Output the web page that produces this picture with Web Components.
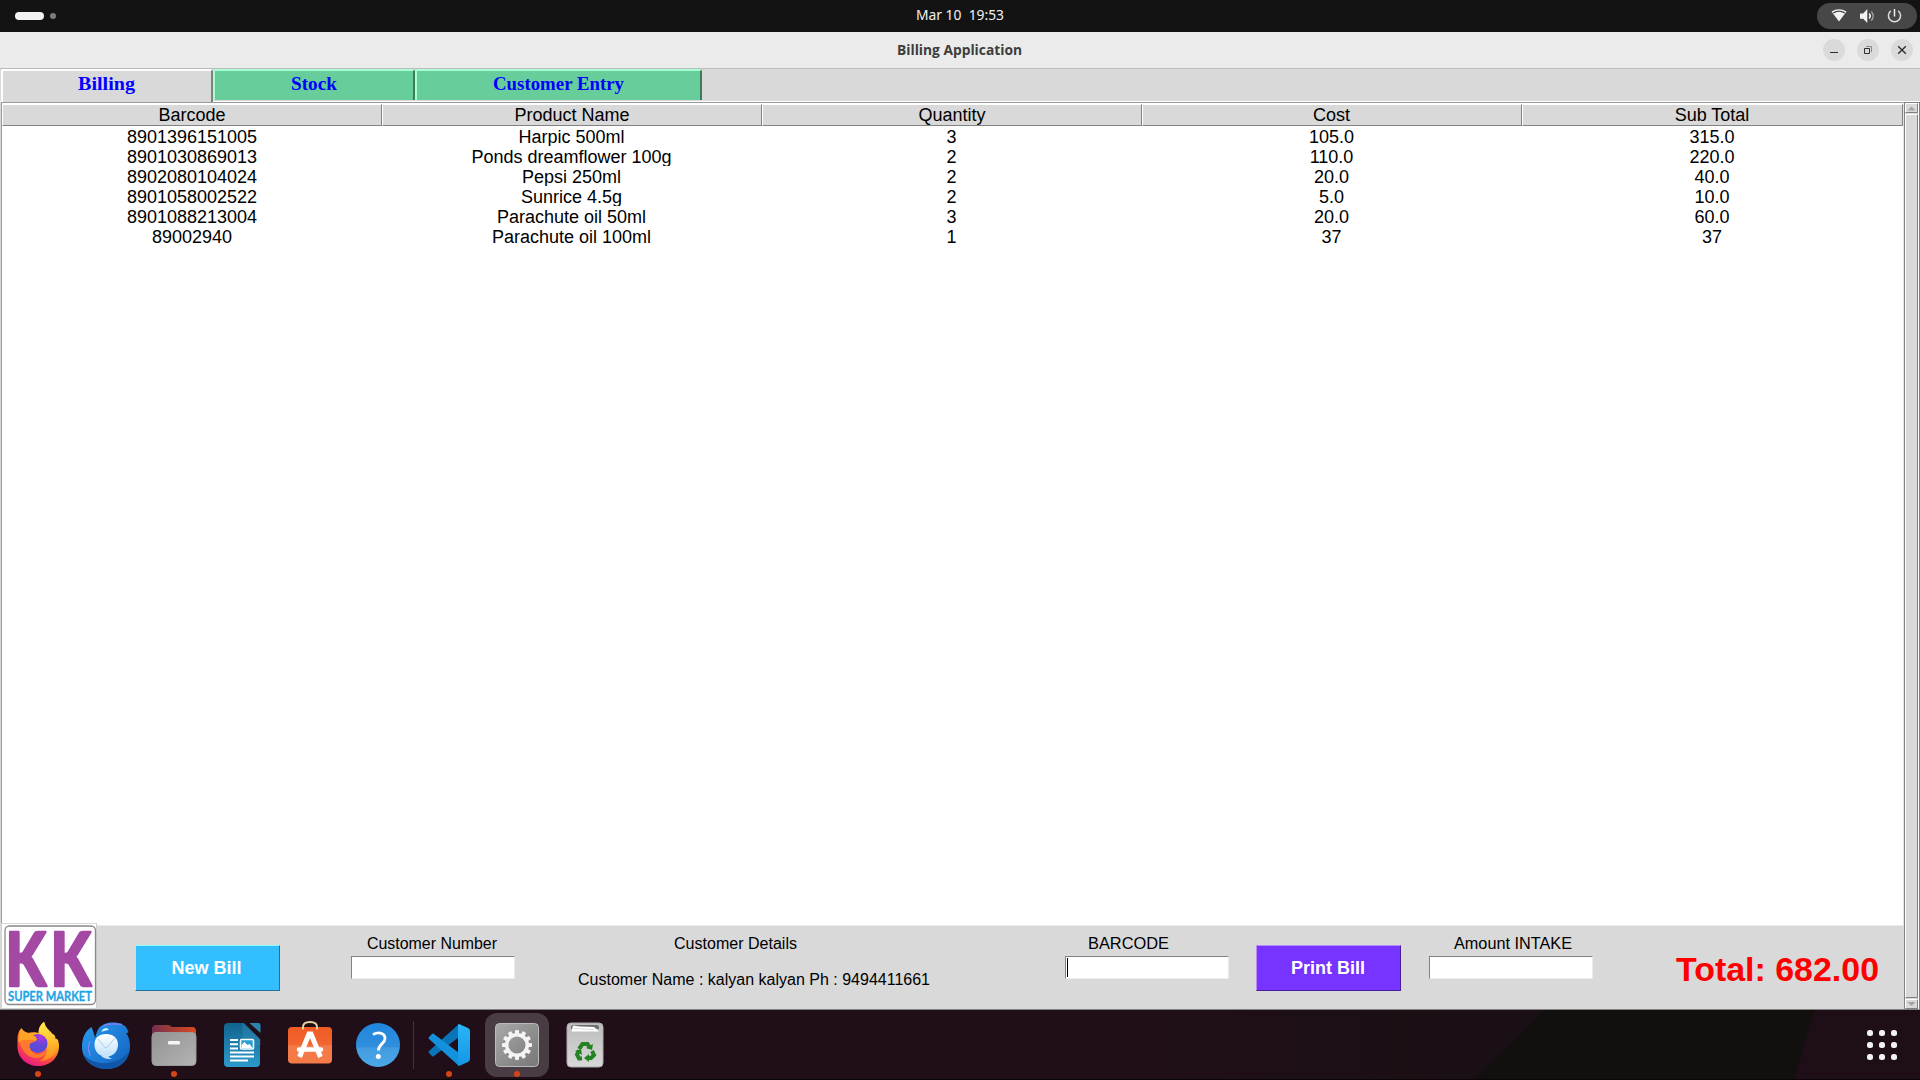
<!DOCTYPE html>
<html lang="en"><head><meta charset="utf-8"><title>Billing Application</title>
<style>html,body{margin:0;height:100%;overflow:hidden}body{font-family:"Liberation Sans",Arial,sans-serif;color:#000}</style></head>
<body><desktop-screen></desktop-screen>
<script>
const define=(name,html,init)=>customElements.define(name,class extends HTMLElement{
  constructor(){super();this.attachShadow({mode:'open'}).innerHTML='<style>*{box-sizing:border-box}:host{display:block;box-sizing:border-box}</style>'+html;}
  connectedCallback(){if(init&&!this.ready){this.ready=true;init(this,this.shadowRoot);}}
});

define('fit-text',`<style>:host{display:block}svg{display:block;overflow:visible}</style><svg height="1" width="1"><text></text></svg>`,(el,r)=>{
  const t=r.querySelector('text');t.textContent=el.getAttribute('value');
  const s=r.querySelector('svg'),w=el.getAttribute('w'),h=el.getAttribute('h');
  s.setAttribute('width',w);s.setAttribute('height',h);
  t.setAttribute('y',el.getAttribute('base'));t.setAttribute('textLength',w);t.setAttribute('lengthAdjust','spacingAndGlyphs');
  t.setAttribute('fill','currentColor');
});

define('top-bar',`<style>
:host{display:flex;height:32px;background:#131313;align-items:center;padding:0 3px 0 15px;justify-content:space-between;color:#f2f2f2}
.ws,.status{flex:1 1 0;display:flex;align-items:center}
.pill{width:29px;height:8px;border-radius:4px;background:#f2f2f2;margin-right:6px}.dot{width:6px;height:6px;border-radius:3px;background:#7d7d7d}
fit-text{font:400 14px "Noto Sans","Open Sans",sans-serif;margin-left:-12px}
.status{justify-content:flex-end}.tray{width:100px;height:26px;border-radius:13px;background:#474747;display:flex}
svg{display:block}
</style><div class="ws"><i class="pill"></i><i class="dot"></i></div>
<fit-text value="Mar 10&nbsp; 19:53" w="88" h="32" base="20"></fit-text>
<div class="status"><div class="tray"><svg width="100" height="26" fill="none" stroke="#f2f2f2">
<path d="M14.5 8.5Q22 3.8 29.500 8.500L22 18.500Z" fill="#f2f2f2" stroke="none"/><path d="M16.300 9.900Q22 6.400 27.700 9.900" stroke="#474747" stroke-width="1.300"/>
<path d="M43 10.500h3.200L50.300 6v14l-4.100-4.300H43Z" fill="#f2f2f2" stroke="none"/><path d="M52.300 10.600q1.800 2.400 0 4.800" stroke-width="1.600"/><path d="M54.300 8.300q3.800 4.700 0 9.400" stroke="#aaa" stroke-width="1.200"/>
<path d="M73.800 7.800a6.100 6.100 0 1 0 7.400 0" stroke-width="1.500" stroke="#ddd"/><path d="M77.500 6v7.500" stroke-width="1.500"/></svg></div></div>`);

define('window-button',`<style>:host{width:22px;height:22px;border-radius:11px;background:#dadada}svg{display:block}</style><svg width="22" height="22" fill="none" stroke="#2e2e2e"></svg>`,(el,r)=>{
  r.querySelector('svg').innerHTML={min:'<path d="M7 13.500h8" stroke-width="1"/>',
  max:'<path d="M7.500 9.500h5v5h-5z"/><path d="M9 7.500h5.500V13" stroke="#888"/>',close:'<path d="M7.200 7.200l7.600 7.600M14.800 7.200l-7.600 7.600" stroke-width="1.400"/>'}[el.getAttribute('kind')];
});

define('title-bar',`<style>
:host{display:flex;height:37px;background:#ebebeb;border-bottom:1px solid #bcbcbc;align-items:center;padding-right:7px}
div{flex:1 1 0}.btns{display:flex;justify-content:flex-end;gap:12px}
fit-text{font:700 14px "Open Sans","Noto Sans",sans-serif;color:#3d3d3d;margin-left:6px}
</style><div></div><fit-text value="Billing Application" w="125" h="36" base="23"></fit-text>
<div class="btns"><window-button kind="min"></window-button><window-button kind="max"></window-button><window-button kind="close"></window-button></div>`);

customElements.define('tab-label',class extends HTMLElement{
  connectedCallback(){if(this.shadowRoot)return;const r=this.attachShadow({mode:'open'});
  r.innerHTML=`<style>:host{display:flex;box-sizing:border-box;justify-content:center;height:31px;width:${this.getAttribute('width')}px;background:#66cd9b;border-top:2px solid #a8ffd4;border-left:2px solid #a8ffd4;border-right:2px solid #3d7b5d;border-radius:2px 3px 0 0;color:#00f;font:700 19.500px "Liberation Serif",serif}
  :host([active]){background:#d9d9d9;border-color:#fff #828282 #fff #fff;height:33px}fit-text{margin-left:-1px}</style><fit-text value="${this.getAttribute('name')}" w="${this.getAttribute('tw')}" h="29" base="19"></fit-text>`;}
});

define('tab-strip',`<style>:host{display:flex;height:33px;background:#d9d9d9;border-bottom:1px solid #fff;align-items:flex-start;padding-left:1px}</style>
<tab-label active name="Billing" width="212" tw="57"></tab-label><tab-label name="Stock" width="202" tw="46"></tab-label><tab-label name="Customer Entry" width="287" tw="131"></tab-label>`);

define('bill-table',`<style>
:host{flex:1;border:1px solid #9a9a9a;border-bottom:1px solid #ebebeb;border-right-color:#e4e4e4;background:#fff;padding:1px 0 0;margin-left:1px;min-height:0}
.head,.row{display:grid;grid-template-columns:repeat(4,380px) 1fr;text-align:center;font-size:18px}
.head{height:22px}.head div{background:#d9d9d9;border-right:1px solid #828282;border-bottom:1px solid #828282;border-left:1px solid #fff;border-top:1px solid #fff;line-height:21px;height:22px}
.head div:nth-child(n+4),.row div:nth-child(n+2){padding-right:1px}
.row{height:20px;line-height:22px;overflow:hidden}
</style><div class="head"></div><div class="body"></div>`,(el,r)=>{
  r.querySelector('.head').innerHTML=['Barcode','Product Name','Quantity','Cost','Sub Total'].map(x=>`<div>${x}</div>`).join('');
  r.querySelector('.body').innerHTML=[['8901396151005','Harpic 500ml','3','105.0','315.0'],['8901030869013','Ponds dreamflower 100g','2','110.0','220.0'],['8902080104024','Pepsi 250ml','2','20.0','40.0'],['8901058002522','Sunrice 4.5g','2','5.0','10.0'],['8901088213004','Parachute oil 50ml','3','20.0','60.0'],['89002940','Parachute oil 100ml','1','37','37']]
  .map(a=>'<div class="row">'+a.map(x=>`<div>${x}</div>`).join('')+'</div>').join('');
});

define('market-logo',`<style>:host{width:96px;height:86px;margin:-3px 0 0 1px;background:#fff;border:1px solid #d0d0d0;border-top-color:#d9d9d9}svg{display:block;overflow:visible}</style>
<svg width="94" height="84" viewBox="2 924 94 84"><rect x="5" y="926" width="90.500" height="78.500" rx="4.500" fill="#fff" stroke="#8b878b" stroke-width="1.300"/>
<g fill="#a349a4" stroke="#a349a4" stroke-width="2.500" stroke-linejoin="round" font-family="Lato,sans-serif" font-weight="900" font-size="75"><text x="5.500" y="985.500" textLength="40.500" lengthAdjust="spacingAndGlyphs">K</text><text x="50.500" y="985.500" textLength="40.500" lengthAdjust="spacingAndGlyphs">K</text></g>
<text x="8" y="1000.500" font-family="Lato,sans-serif" font-weight="700" font-size="13.500" fill="#1ca4e6" stroke="#1ca4e6" stroke-width=".3" textLength="84" lengthAdjust="spacingAndGlyphs">SUPER MARKET</text></svg>`);

define('push-button',`<style>:host{width:145px;height:46px;color:#fff;font:700 18px/44px "Liberation Sans",sans-serif;text-align:center;background:var(--c);border:1px solid;border-color:var(--hi) var(--lo) var(--lo) var(--hi);padding-right:1px}</style><slot></slot>`);

customElements.define('labelled-entry',class extends HTMLElement{
  connectedCallback(){if(this.shadowRoot)return;this.attachShadow({mode:'open'}).innerHTML=`<style>:host{display:block;width:164px;padding-top:8px}div{box-sizing:border-box}.l{height:22px;font-size:16px;padding-left:${this.getAttribute('indent')}px}
  .box{height:23px;background:#fff;border:1px solid;border-color:#828282 #ebebeb #ebebeb #828282;padding:1px}.box i{display:block;width:1px;height:19px}:host([focus]) i{background:#000}</style><div class="l"><fit-text value="${this.getAttribute('label')}" w="${this.getAttribute('w')}" h="20" base="15"></fit-text></div><div class="box"><i></i></div>`;}
});

define('bill-footer',`<style>
:host{height:84px;background:#d9d9d9;border-bottom:1px solid #828282;display:flex;align-items:flex-start}
.new{--c:#33beff;--hi:#8ff;--lo:#1f7299;margin:19px 71px 0 38px;padding-right:2px}.print{--c:#7733ff;--hi:#b78cff;--lo:#471f99;margin:19px 28px 0 27px}
.details{width:352px;margin:8px 135px 0 63px;font-size:16px}.details fit-text:first-child{margin-left:96px;height:36px}
.total{margin:25px 0 0 83px;color:red;font:700 32.500px "Liberation Sans",sans-serif}
</style><market-logo></market-logo><push-button class="new">New Bill</push-button>
<labelled-entry label="Customer Number" indent="16" w="130"></labelled-entry>
<div class="details"><fit-text value="Customer Details" w="123" h="20" base="15"></fit-text><fit-text value="Customer Name : kalyan kalyan Ph : 9494411661" w="352" h="20" base="15"></fit-text></div>
<labelled-entry focus label="BARCODE" indent="23" w="81"></labelled-entry>
<push-button class="print">Print Bill</push-button>
<labelled-entry label="Amount INTAKE" indent="25" w="118"></labelled-entry>
<fit-text class="total" value="Total: 682.00" w="203" h="40" base="30"></fit-text>`);

define('scroll-bar',`<style>:host{width:16px;display:flex;flex-direction:column;background:#d9d9d9;border:1px solid #828282;padding:0}
.in{flex:1;display:flex;flex-direction:column;border-right:1px solid #fff}
.b{height:10px;flex:none;border:1px solid;border-color:#fff #828282 #828282 #fff}.t{flex:1;border:1px solid;border-color:#fff #828282 #828282 #fff;margin:1px 0}svg{display:block}</style>
<div class="in"><div class="b"><svg width="11" height="8"><path d="M1.500 6.500L5.500 2.500l4 4z" fill="#a3a3a3"/></svg></div><div class="t"></div><div class="b"><svg width="11" height="8"><path d="M1.500 2L5.500 6l4-4z" fill="#a3a3a3"/></svg></div></div>`);

define('billing-window',`<style>:host{display:flex;flex-direction:column;height:978px;background:#d9d9d9}.main{flex:1;display:flex;min-height:0}.pane{flex:1;display:flex;flex-direction:column;min-width:0}</style>
<title-bar></title-bar><tab-strip></tab-strip><div class="main"><div class="pane"><bill-table></bill-table><bill-footer></bill-footer></div><scroll-bar></scroll-bar></div>`);

const gear=Array.from({length:12},(_,i)=>`<rect x="-2" y="-15" width="4" height="6" rx="1" transform="rotate(${i*30})"/>`).join('');
const icons={
firefox:`<defs><linearGradient id="a" x1=".8" y1="0" x2=".3" y2="1"><stop stop-color="#fff04a"/><stop offset=".4" stop-color="#ffa61f"/><stop offset=".7" stop-color="#ff4b3e"/><stop offset="1" stop-color="#e5188c"/></linearGradient><radialGradient id="b" cx=".65" cy=".15"><stop stop-color="#b833e1"/><stop offset="1" stop-color="#5b4bd8"/></radialGradient><linearGradient id="c" x1="0" y1="0" x2="0" y2="1"><stop stop-color="#fff04a"/><stop offset="1" stop-color="#ff8a16"/></linearGradient></defs>
<path d="M17 20C17 13 19 10 21 8C22 11 24 13 27 13C31 12 36 12 38 13C38 8 41 4 44 2C44 7 50 11 52 14C54 14 55 17 55 19C57 18 58 20 58.500 25C59 38 49 46 38 46C26 46 17 38 17 26Z" transform="translate(-3.500)" fill="url(#a)"/>
<path d="M35 13C34 8 37 4 40 2C40 8 48 12 51 19C57 31 47 41 36 41C45 36 47 22 35 13Z" fill="url(#c)"/><circle cx="34" cy="23.500" r="9.500" fill="url(#b)"/>
<path d="M14 20C19 15 25 18 31 18L33 20C31 22 29 22 27 23C24 25 26 31 30 33C36 36 39 32 42 33C38 39 31 39 25 36C18 32 17 24 14 20Z" fill="#ff7a2e"/><path d="M18 9C21 13 27 13 32 17L33 20C28 21 22 18 14.500 22C14.500 15 16 12 18 9Z" fill="#ffa225"/>`,
thunderbird:`<defs><linearGradient id="a" x1="0" y1="0" x2="1" y2="1"><stop stop-color="#2a9bf2"/><stop offset="1" stop-color="#1260bd"/></linearGradient><linearGradient id="b" x1="0" y1="0" x2="0" y2="1"><stop stop-color="#fff"/><stop offset="1" stop-color="#b9def9"/></linearGradient></defs>
<path d="M19.500 7C13 11 10 18 10 27C10 39 20 49 35 49C48 49 58 40 58 26C58 20 56 15 54 13C57 13 57 12 55 9C54 7 54 6 49 4C41 1 31 3 27 8C25 11 24 14 23 18C22 14 21 10 19.500 7Z" fill="url(#a)"/><path d="M11 33C15 42 39 51 57 32C55 42 46 49 35 49C23 49 13 42 11 33Z" fill="#1057aa"/>
<path d="M18 21C15.500 26 16 31 18.500 36" fill="none" stroke="#7389ef" stroke-width="1.400"/><path d="M31 6C36 3 43 3.500 50 4.500" fill="none" stroke="#8e7cf2" stroke-width="1.300"/><path d="M29.500 12C30 9.500 32 8 35 8L37 10C34 10 32 11 29.500 12Z" fill="#d2effc"/>
<path d="M34 14C41 14 46 18 46 24.500C46 31 42 35.500 36.500 36.500C37 38 39 38.500 40.500 38.500C36 40 31 38.500 29 35.500C25 33.500 22.500 30 22.500 24.500C22.500 18 27 14 34 14Z" fill="url(#b)"/><path d="M26 19L32.500 27q1.500 2 3 0L43 18" fill="none" stroke="#a5cdec" stroke-width="1"/>`,
files:`<defs><linearGradient id="a"><stop stop-color="#74304d"/><stop offset="1" stop-color="#dc4a20"/></linearGradient><linearGradient id="b" x1="0" y1="0" x2="1" y2="1"><stop stop-color="#929292"/><stop offset="1" stop-color="#b4b4b4"/></linearGradient></defs><path d="M12 17V9q0-4 4-4h12q2 0 4 2h20q4 0 4 4v10H12z" fill="url(#a)"/><rect x="12" y="12.500" width="44" height="33" rx="4" fill="url(#b)" stroke="#999"/><rect x="28" y="21" width="12" height="3.500" rx="1.200" fill="#f5f5f5"/>`,
writer:`<defs><linearGradient id="a" x1="0" y1="0" x2="0" y2="1"><stop stop-color="#12638e"/><stop offset="1" stop-color="#2b9acb"/></linearGradient></defs><g transform="translate(-.500)"><path d="M20 3H36L52 19V43q0 4-4 4H20q-4 0-4-4V7q0-4 4-4z" transform="translate(.500)" fill="url(#a)"/><path d="M35 3L53 20V25H35z" fill="#3c94bb" opacity=".35"/><path d="M42 3h9q2 0 2 2v8z" fill="#2b85ad"/><path d="M22 19.500h8M22 23.700h8M22 28h8M22 32h24M22 36h24M22 40h18" transform="translate(.5 .5)" stroke="#fff" stroke-width="2"/><rect x="33" y="19.500" width="13" height="9.500" rx="1" fill="#2b9ed3" stroke="#fff" stroke-width="1.500"/><path d="M34 28v-3l3-3 3 3 2-1 3 4z" fill="#fff"/></g>`,
store:`<defs><linearGradient id="a" x1="0" y1="0" x2="0" y2="1"><stop stop-color="#f05b23"/><stop offset=".5" stop-color="#f26532"/><stop offset=".51" stop-color="#f47a48"/><stop offset="1" stop-color="#f47b48"/></linearGradient></defs><path d="M27 10V7q0-5 7-5t7 5v3" fill="none" stroke="#e8cf9e" stroke-width="2"/><rect x="12" y="7" width="44" height="36.500" rx="4" fill="url(#a)"/><path d="M27 9.500V7M41 9.500V7" stroke="#e8cf9e" stroke-width="2"/><path d="M23.500 37L33 14h2l9.500 23" fill="none" stroke="#fff" stroke-width="5"/><path d="M23 29.500h22" stroke="#fff" stroke-width="4.500" stroke-linecap="round"/>`,
help:`<defs><linearGradient id="a" x1="0" y1="0" x2="0" y2="1"><stop stop-color="#1f86dd"/><stop offset=".55" stop-color="#318fdd"/><stop offset=".56" stop-color="#429be0"/><stop offset="1" stop-color="#4ba9e8"/></linearGradient></defs><circle cx="34" cy="25" r="22" fill="url(#a)"/><path d="M29 14.500C35 11.500 41 13 41 18.500C41 23.500 34.500 24 34.500 30.500" fill="none" stroke="#fff" stroke-width="2.800"/><circle cx="34.300" cy="36.500" r="2.500" fill="#fff"/>`,
code:`<defs><linearGradient id="a" x1="0" y1="0" x2="0" y2="1"><stop stop-color="#29b6f6"/><stop offset="1" stop-color="#1596e8"/></linearGradient></defs><path d="M44 4L14 31q-1 1 0 2l3 3q1 1 2 0L44 17z" fill="#0b74b8"/><path d="M44 46L14 19q-1-1 0-2l3-3q1-1 2 0L44 33z" fill="#1590dc"/><path d="M44 4l9 4q2 1 2 3v28q0 2-2 3l-9 4q-1 0-1-2V6q0-2 1-2z" fill="url(#a)"/>`,
settings:`<defs><linearGradient id="a" x1="0" y1="0" x2="1" y2="1"><stop stop-color="#a9a9a9"/><stop offset="1" stop-color="#777"/></linearGradient></defs><rect x="12.500" y="3.500" width="43" height="43" rx="4" fill="url(#a)" stroke="#bbb"/><g transform="translate(34 25)" fill="#f4f4f4">${gear}<circle r="10.300" fill="none" stroke="#f4f4f4" stroke-width="3.500"/></g>`,
trash:`<defs><linearGradient id="a" x1="0" y1="0" x2="0" y2="1"><stop stop-color="#bdbdbd"/><stop offset="1" stop-color="#d8d8d8"/></linearGradient></defs><rect x="16" y="3" width="36" height="44" rx="4" fill="url(#a)" stroke="#aaa"/><path d="M20 9V7q0-2 2-2h24q2 0 2 2v2z" fill="#707070"/><path d="M20.500 11.500l1.500-6 7 1 14 .500 5 4.500z" fill="#fff"/><path d="M23 8.500l20 1" stroke="#ccc" stroke-width=".7"/><g fill="none" stroke="#248320" stroke-width="4"><path d="M28 29l3.500-5h5l2.500 4M41 31l2 4-3 3h-4M31 38.500h-3l-2-4 2-4"/></g><g fill="#248320"><path d="M35 28l6 2 1-6z"/><path d="M38 34v8l-5-4z"/><path d="M24 31l6-2 1 6z"/></g>`};
define('dock-icon',`<style>:host{width:68px;height:70px;position:relative;z-index:0}svg{display:block;margin-top:10px;overflow:visible}:host([active])::before{content:"";position:absolute;z-index:-1;left:2px;top:3px;width:64px;height:64px;border-radius:12px;background:#493c44}:host([running])::after{content:"";position:absolute;left:31px;top:61px;width:6px;height:6px;border-radius:3px;background:#d64516}</style><svg width="68" height="50" viewBox="0 0 68 50"></svg>`,(el,r)=>{r.querySelector('svg').innerHTML=icons[el.getAttribute('icon')];});

define('task-dock',`<style>:host{display:flex;height:70px;padding-left:4px;background:linear-gradient(90deg,#200f18 60%,#1a0f14 76%,#1a0f14 90%,#1e0e18 92%);border-bottom:1px solid #0b0709;position:relative;isolation:isolate}
:host::before{content:"";position:absolute;inset:0;z-index:-1;background:#120f0f;clip-path:polygon(1545px 0,1814.500px 0,1794px 100%,1474px 100%)}
.sep{width:1px;height:48px;background:#403338;margin:11px 1px 0}.grid{display:grid;grid-template-columns:repeat(3,6px);grid-auto-rows:6px;gap:6px;margin:20px 23px 0 auto}.grid i{background:#f2f2f2;border-radius:2.500px}</style>
<dock-icon icon="firefox" running></dock-icon><dock-icon icon="thunderbird"></dock-icon><dock-icon icon="files" running></dock-icon><dock-icon icon="writer"></dock-icon><dock-icon icon="store"></dock-icon><dock-icon icon="help"></dock-icon><div class="sep"></div><dock-icon icon="code" running></dock-icon><dock-icon icon="settings" running active></dock-icon><dock-icon icon="trash"></dock-icon><div class="grid"><i></i><i></i><i></i><i></i><i></i><i></i><i></i><i></i><i></i></div>`);

define('desktop-screen',`<style>:host{width:1920px;height:1080px;background:#1f0f18}</style><top-bar></top-bar><billing-window></billing-window><task-dock></task-dock>`);
</script></body></html>
